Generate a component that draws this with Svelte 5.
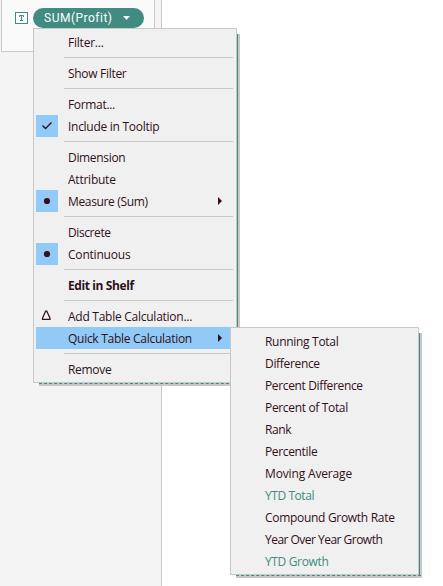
<script>
  const menu = [
    { label: 'Filter...', track: -0.22 },
    null,
    { label: 'Show Filter', track: -0.3 },
    null,
    { label: 'Format...', track: -0.33 },
    { label: 'Include in Tooltip', track: -0.28, mark: 'check' },
    null,
    { label: 'Dimension', track: -0.33 },
    { label: 'Attribute', track: -0.24 },
    { label: 'Measure (Sum)', track: -0.35, mark: 'dot', arrow: true },
    null,
    { label: 'Discrete', track: -0.4 },
    { label: 'Continuous', track: -0.2, mark: 'dot' },
    null,
    { label: 'Edit in Shelf', track: -0.4, bold: true },
    null,
    { label: 'Add Table Calculation...', track: -0.26, mark: 'delta' },
    { label: 'Quick Table Calculation', track: -0.28, arrow: true, active: true },
    null,
    { label: 'Remove', track: -0.3 }
  ];
  const submenu = [
    { label: 'Running Total', track: -0.3 },
    { label: 'Difference', track: -0.33 },
    { label: 'Percent Difference', track: -0.36 },
    { label: 'Percent of Total', track: -0.34 },
    { label: 'Rank', track: -0.4 },
    { label: 'Percentile', track: -0.35 },
    { label: 'Moving Average', track: -0.15 },
    { label: 'YTD Total', track: -0.44, muted: true },
    { label: 'Compound Growth Rate', track: -0.3 },
    { label: 'Year Over Year Growth', track: -0.52 },
    { label: 'YTD Growth', track: -0.35, muted: true }
  ];
</script>

<div class="screen">
  <aside>
    <div class="card">
      <svg class="type" width="13" height="12" viewBox="0 0 13 12">
        <rect x=".5" y=".5" width="12" height="11" fill="#fff" stroke="#418b80" />
        <path d="M4.5 5V3.5H8.5V5M6.5 3.5V8.5M5 8.5H8" fill="none" stroke="#418b80" />
      </svg>
      <div class="pill">
        <span>SUM(Profit)</span>
        <svg width="7" height="4" viewBox="0 0 7 4"><path d="M0 0H7L3.5 4Z" fill="#fff" /></svg>
      </div>
    </div>
  </aside>

  <div class="menu main">
    {#each menu as item}
      {#if item}
        <div class="row" class:active={item.active} class:bold={item.bold}>
          <span class="mark" class:on={item.mark === 'check' || item.mark === 'dot'}>
            {#if item.mark === 'check'}
              <svg width="22" height="22" viewBox="0 0 22 22"><path d="M6.5 10.5L9.5 13.5L15.5 7.5" fill="none" stroke="#301020" stroke-width="1.4" /></svg>
            {:else if item.mark === 'dot'}
              <svg width="22" height="22" viewBox="0 0 22 22"><circle cx="11" cy="11" r="3.1" fill="#3a0c20" /></svg>
            {:else if item.mark === 'delta'}
              <svg width="22" height="22" viewBox="0 0 22 22"><path d="M9.6 6.2H10.8L14 13.2V14.4H6.5V13.2Z" fill="none" stroke="#301020" stroke-width="1.2" /></svg>
            {/if}
          </span>
          <span class="label" style="letter-spacing: {item.track}px">{item.label}</span>
          {#if item.arrow}
            <svg class="arrow" width="4" height="8" viewBox="0 0 4 8"><path d="M0 0L4 4L0 8Z" fill="#3a0c20" /></svg>
          {/if}
        </div>
      {:else}
        <div class="sep"></div>
      {/if}
    {/each}
  </div>

  <div class="menu sub">
    {#each submenu as item}
      <div class="row" class:muted={item.muted}>
        <span class="label" style="letter-spacing: {item.track}px">{item.label}</span>
      </div>
    {/each}
  </div>
</div>

<style>
  .screen {
    position: relative;
    width: 443px;
    height: 586px;
    overflow: hidden;
    background: #fff;
    font: 12px/22px 'Open Sans', 'Noto Sans', sans-serif;
    color: #301020;
  }
  svg { display: block; flex: none; }
  aside {
    box-sizing: border-box;
    width: 162px;
    height: 586px;
    background: #f4f4f4;
    border-right: 1px solid #c8c8c8;
  }
  .card {
    box-sizing: border-box;
    display: flex;
    align-items: flex-start;
    width: 154px;
    height: 52px;
    margin-left: 1px;
    padding: 8px 0 0 13px;
    background: #fafafa;
    border: 1px solid #c8c8c8;
    border-top: 0;
  }
  .type { margin-top: 4px; }
  .pill {
    box-sizing: border-box;
    display: flex;
    align-items: center;
    justify-content: space-between;
    width: 111px;
    height: 20px;
    margin-left: 5px;
    padding: 0 14px 0 11px;
    border-radius: 10px;
    background: #418b80;
    color: #fff;
    font: 12px/20px Roboto, sans-serif;
    letter-spacing: 0.5px;
  }
  .menu {
    position: absolute;
    box-sizing: border-box;
    background: #f0f0f0;
    border: 1px solid #c8c8c8;
    padding: 2px;
  }
  .menu::before,
  .menu::after { content: ''; position: absolute; box-sizing: border-box; }
  .menu::before {
    top: 5px;
    bottom: -4px;
    right: -4px;
    width: 3px;
    background: #c8c8c8;
    border-left: 1px solid #418b80;
  }
  .menu::after {
    left: 5px;
    right: -3px;
    bottom: -4px;
    height: 3px;
    background: #c8c8c8;
    border-top: 1px dashed #418b80;
  }
  .main { left: 33px; top: 28px; width: 204px; height: 355px; }
  .sub { left: 230px; top: 327px; width: 189px; height: 248px; }
  .row { display: flex; align-items: center; height: 22px; }
  .mark { width: 22px; height: 22px; margin-right: 10px; flex: none; }
  .on, .active { background: #91c9f7; }
  .label { white-space: pre; padding-top: 2px; }
  .sub .label { margin-left: 32px; }
  .arrow { margin-left: auto; margin-right: 12px; }
  .bold { font-weight: 700; }
  .muted { color: #418b80; }
  .sep {
    height: 1px;
    margin: 4px 1px 4px 28px;
    background: #c8c8c8;
  }
</style>
